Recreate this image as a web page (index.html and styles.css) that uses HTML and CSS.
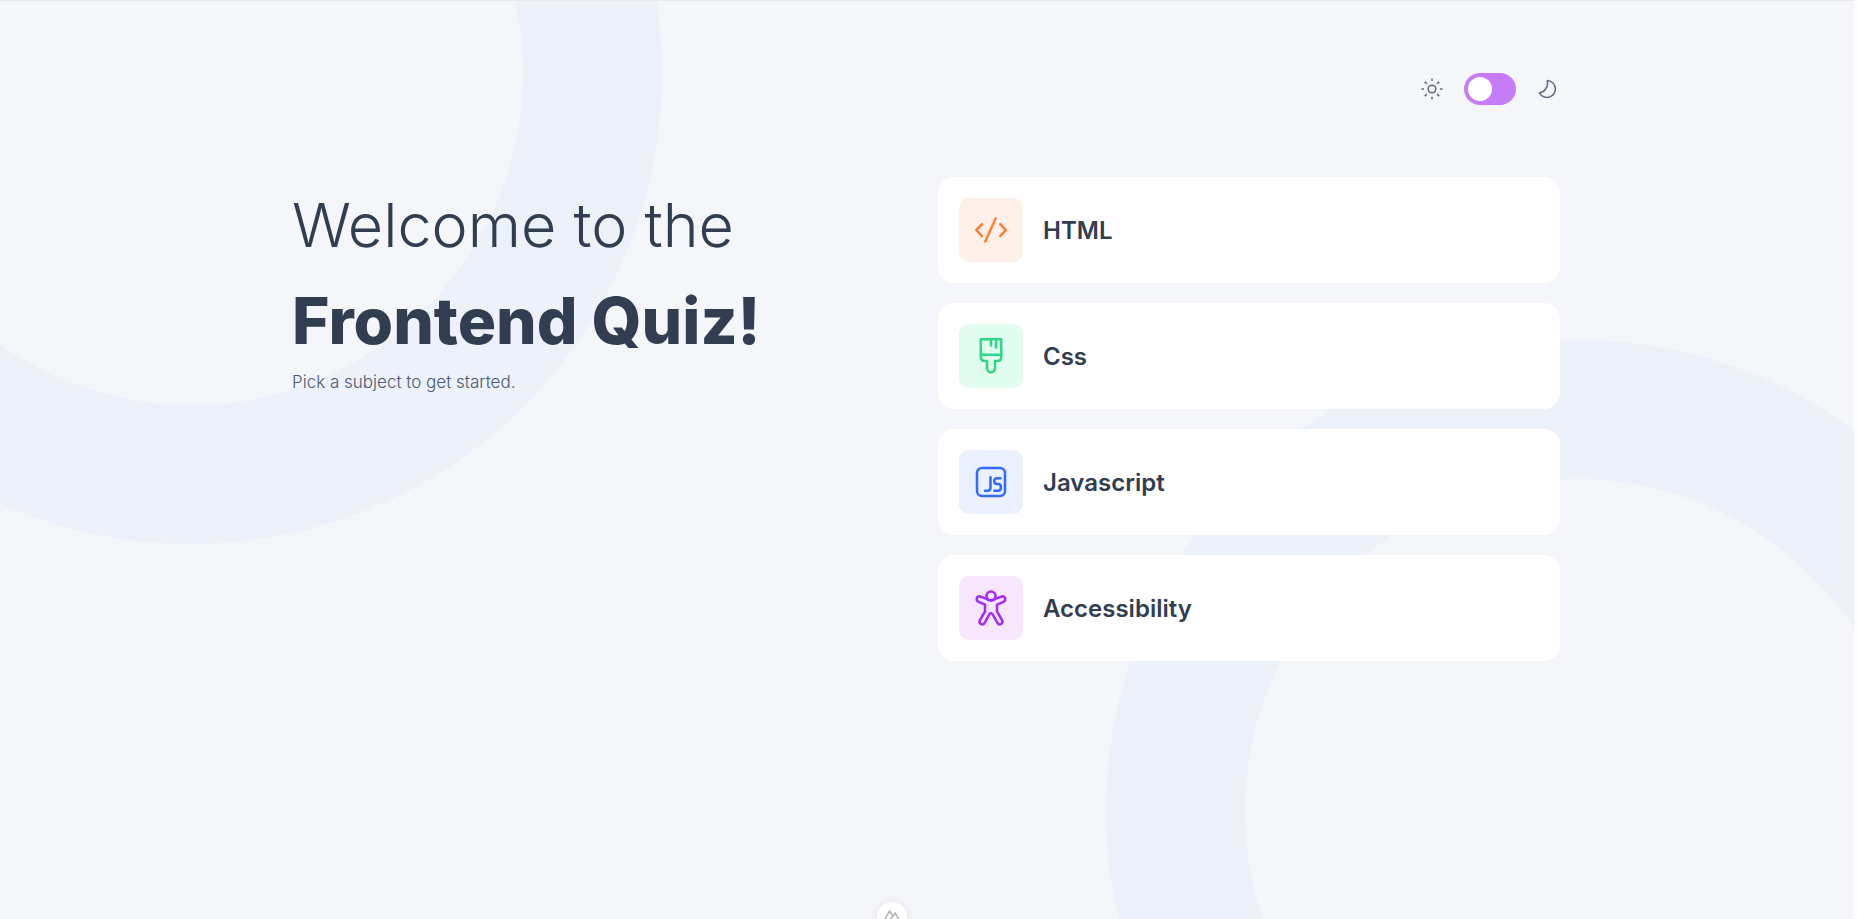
FILE: index.html
```html
<!DOCTYPE html>
<html lang="en">
<head>
<meta charset="utf-8">
<meta name="viewport" content="width=device-width, initial-scale=1">
<title>Frontend Quiz</title>
<link rel="stylesheet" href="styles.css">
</head>
<body>
<div class="page">
  <svg class="rings" viewBox="0 0 1854 918" preserveAspectRatio="xMidYMin slice" aria-hidden="true">
    <circle cx="191" cy="72" r="401.5"/>
    <circle cx="1577" cy="810" r="401.5"/>
  </svg>
  <div class="container">
    <header class="header">
      <svg class="theme-icon" viewBox="0 0 24 24" aria-hidden="true">
        <circle cx="12" cy="12" r="3.8"/>
        <path d="M12 1.5V4M12 20v2.5M1.5 12H4M20 12h2.5M4.700 4.700l2.200 2.200M17.100 17.100l2.200 2.200M4.700 19.300l2.200-2.200M17.100 6.900l2.200-2.200"/>
      </svg>
      <input class="switch" type="checkbox" role="switch" aria-label="Dark mode">
      <svg class="theme-icon" viewBox="0 0 24 24" aria-hidden="true">
        <path d="M11.3 3.6a8.4 8.4 0 1 1-7.8 12.2C8.8 15 12.6 9.8 11.3 3.6z"/>
      </svg>
    </header>
    <main class="columns">
      <section>
        <h1 class="title">Welcome to the <strong class="title-strong">Frontend Quiz!</strong></h1>
        <p class="lead">Pick a subject to get started.</p>
      </section>
      <section class="subjects">
        <button class="subject" type="button">
          <span class="subject-icon html"><svg viewBox="0 0 40 40" aria-hidden="true"><path d="M11 14.2L5.300 20.100l5.700 6M24.700 8.500L14.200 31.400M29.200 14.200l5.700 5.900-5.700 6"/></svg></span>
          HTML
        </button>
        <button class="subject" type="button">
          <span class="subject-icon css"><svg viewBox="0 0 40 40" aria-hidden="true"><path d="M9.8 3.2h20.5V21q0 4-4 4H24v7.3a4 4 0 0 1-8 0V25h-2.2q-4 0-4-4zM9.8 18.7h20.5M20 3.2v6.3M25 3.2v8.3"/></svg></span>
          Css
        </button>
        <button class="subject" type="button">
          <span class="subject-icon js"><svg viewBox="0 0 40 40" aria-hidden="true"><rect x="6" y="6" width="28" height="28" rx="5"/><path d="M19.5 15.3v10.2q0 3.3-2.8 3.3H14M29.500 16.200h-3.300q-2.900 0-2.900 2.600v.8q0 2.500 2.900 2.500h.7q2.900 0 2.900 2.500v1.500q0 2.700-2.900 2.700h-3.600"/></svg></span>
          Javascript
        </button>
        <button class="subject" type="button">
          <span class="subject-icon a11y"><svg viewBox="0 0 40 40" aria-hidden="true"><circle cx="20" cy="8" r="4.5"/><path d="M15.6 10.9L9 8.5C5.5 7.5 4.5 12.5 7.6 13.9L14 16.6V23.5L8.800 32.300C7.300 35.500 11.600 38 13.600 35L17.600 27.700Q20 22.200 22.400 27.700L26.400 35C28.400 38 32.700 35.500 31.200 32.300L26 23.500V16.600L32.400 13.900C35.500 12.500 34.500 7.500 31 8.500L24.400 10.900Q20 13.700 15.600 10.900z"/></svg></span>
          Accessibility
        </button>
      </section>
    </main>
  </div>
  <button class="devtools" type="button" aria-label="Developer tools">
    <svg viewBox="0 0 30 30" aria-hidden="true"><path d="M17 18.500h5.500L18 10.800l-2.500 4M15.800 14.200l-3.200-5.200L7 18.500h5.200l3.400-4.300"/></svg>
  </button>
</div>
</body>
</html>
```
FILE: styles.css
```css
* {
  box-sizing: border-box;
}

html {
  background: #fcfcfc;
}

body {
  margin: 0;
  font-family: Inter, Roboto, sans-serif;
  color: #313e51;
}

.page {
  position: relative;
  min-height: 100vh;
  margin-right: 3px;
  padding: 0 26px 0 24px;
  overflow: hidden;
  border-top: 1px solid #e8e9ea;
  background: #f4f6fa;
}

.rings {
  position: absolute;
  inset: 0;
  width: 100%;
  height: 100%;
  fill: none;
  stroke: #ecf1fa;
  stroke-width: 139px;
}

.container {
  position: relative;
  max-width: 1268px;
  margin: 0 auto;
  padding-top: 72px;
}

.header {
  display: flex;
  align-items: center;
  justify-content: flex-end;
  gap: 20px;
  margin-bottom: 72px;
}

.theme-icon {
  width: 24px;
  height: 24px;
  fill: none;
  stroke: #626c7f;
  stroke-width: 1.5px;
  stroke-linejoin: round;
}

.switch {
  appearance: none;
  display: flex;
  width: 52px;
  height: 32px;
  margin: 0;
  padding: 4px;
  border-radius: 16px;
  background: #c67cf9;
  cursor: pointer;
}

.switch::before {
  content: "";
  width: 24px;
  height: 24px;
  border-radius: 50%;
  background: #fff;
}

.switch:checked {
  justify-content: flex-end;
}

.columns {
  display: grid;
  grid-template-columns: repeat(auto-fit, minmax(min(100%, 480px), 1fr));
  gap: 24px;
}

.title {
  margin: 0;
  font-size: 61px;
  font-weight: 300;
  line-height: 96px;
}

.title-strong {
  display: block;
  font-size: 64px;
  font-weight: 800;
}

.lead {
  margin: 0;
  font-size: 17px;
  font-weight: 300;
  line-height: 27px;
  color: #4a5a75;
}

.subjects {
  display: grid;
  gap: 20px;
}

.subject {
  display: flex;
  align-items: center;
  gap: 20px;
  padding: 21px;
  border: 0;
  border-radius: 16px;
  background: #fff;
  font: inherit;
  font-size: 24px;
  font-weight: 600;
  color: inherit;
  text-align: left;
  cursor: pointer;
}

.subject-icon {
  display: grid;
  place-items: center;
  width: 64px;
  height: 64px;
  border-radius: 10px;
}

.subject-icon svg {
  width: 40px;
  height: 40px;
  fill: none;
  stroke: currentColor;
  stroke-width: 2.5px;
  stroke-linecap: round;
  stroke-linejoin: round;
}

.html {
  background: #fff1e9;
  color: #ff7e35;
}

.css {
  background: #e0fdef;
  color: #2fd887;
}

.js {
  background: #ebf0ff;
  color: #306aff;
}

.a11y {
  background: #f6e7ff;
  color: #a729f5;
}

.devtools {
  position: absolute;
  bottom: -13px;
  left: 48.1%;
  width: 30px;
  height: 30px;
  transform: translateX(-50%);
  padding: 0;
  border: 0;
  border-radius: 50%;
  background: #fff;
  box-shadow: 0 0 10px rgba(0, 0, 0, 0.07);
}

.devtools svg {
  display: block;
  fill: none;
  stroke: #b4b4b4;
  stroke-width: 1.5px;
  stroke-linejoin: round;
}
```
